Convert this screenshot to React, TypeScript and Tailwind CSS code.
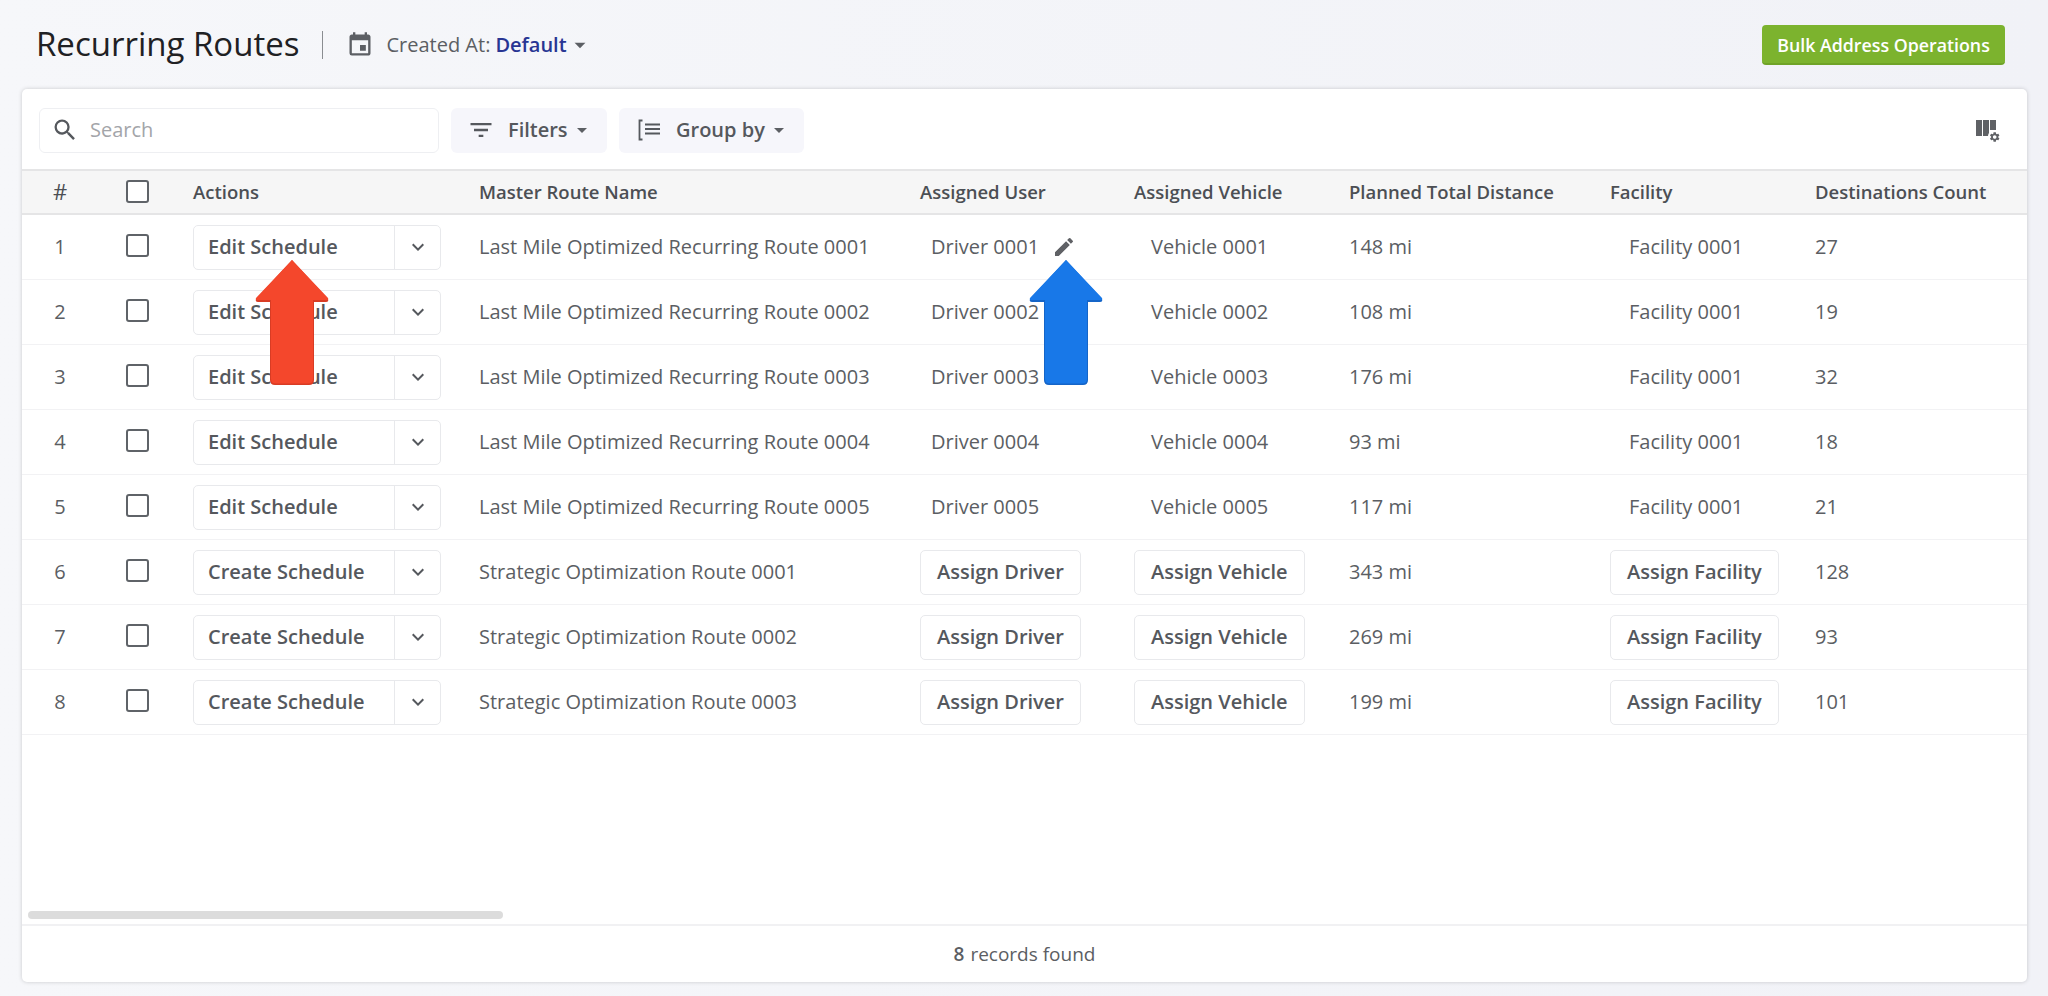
import React from "react";
import { MdEvent, MdSearch, MdFilterList, MdEdit, MdKeyboardArrowDown, MdArrowDropDown } from "react-icons/md";

const grid = "grid grid-cols-[76px_80px_289px_441px_214px_215px_261px_205px_1fr] items-center";

const rows = [
  ["Edit Schedule", "Last Mile Optimized Recurring Route 0001", "Driver 0001", "Vehicle 0001", "148 mi", "Facility 0001", "27"],
  ["Edit Schedule", "Last Mile Optimized Recurring Route 0002", "Driver 0002", "Vehicle 0002", "108 mi", "Facility 0001", "19"],
  ["Edit Schedule", "Last Mile Optimized Recurring Route 0003", "Driver 0003", "Vehicle 0003", "176 mi", "Facility 0001", "32"],
  ["Edit Schedule", "Last Mile Optimized Recurring Route 0004", "Driver 0004", "Vehicle 0004", "93 mi", "Facility 0001", "18"],
  ["Edit Schedule", "Last Mile Optimized Recurring Route 0005", "Driver 0005", "Vehicle 0005", "117 mi", "Facility 0001", "21"],
  ["Create Schedule", "Strategic Optimization Route 0001", "", "", "343 mi", "", "128"],
  ["Create Schedule", "Strategic Optimization Route 0002", "", "", "269 mi", "", "93"],
  ["Create Schedule", "Strategic Optimization Route 0003", "", "", "199 mi", "", "101"],
];

function Check({ className = "" }: { className?: string }) {
  return <span className={"block w-[23px] h-[23px] rounded-[3px] border-[2px] border-[#5f6368] bg-white " + className} />;
}

function Assign({ label }: { label: string }) {
  return (
    <button className="h-[45px] px-4 rounded-[5px] border border-[#e8e9ec] bg-white text-[20px] font-semibold text-[#55585d] whitespace-nowrap">
      {label}
    </button>
  );
}

function GroupIcon() {
  return (
    <svg width="24" height="24" viewBox="0 0 24 24" fill="none" stroke="#55585d" strokeWidth="1.8">
      <path d="M5.5 2.5H2.5V21.5H5.5" />
      <path d="M8 6.5H23M8 11H23M8 15.5H23" />
    </svg>
  );
}

function ColumnsIcon() {
  return (
    <svg width="26" height="28" viewBox="0 0 26 28" fill="#5f6165">
      <rect x="0" y="4" width="6" height="16" />
      <rect x="7" y="4" width="6" height="16" />
      <rect x="14" y="4" width="6" height="10" />
      <circle cx="18.7" cy="21" r="7" fill="#fff" />
      <g transform="translate(12.7 15) scale(0.5)">
        <path d="M19.14 12.94c.04-.3.06-.61.06-.94 0-.32-.02-.64-.07-.94l2.03-1.58c.18-.14.23-.41.12-.61l-1.92-3.32c-.12-.22-.37-.29-.59-.22l-2.39.96c-.5-.38-1.03-.7-1.62-.94l-.36-2.54c-.04-.24-.24-.41-.48-.41h-3.84c-.24 0-.43.17-.47.41l-.36 2.54c-.59.24-1.13.57-1.62.94l-2.39-.96c-.22-.08-.47 0-.59.22L2.74 8.87c-.12.21-.08.47.12.61l2.03 1.58c-.05.3-.09.63-.09.94s.02.64.07.94l-2.03 1.58c-.18.14-.23.41-.12.61l1.92 3.32c.12.22.37.29.59.22l2.39-.96c.5.38 1.03.7 1.62.94l.36 2.54c.05.24.24.41.48.41h3.84c.24 0 .44-.17.47-.41l.36-2.54c.59-.24 1.13-.56 1.62-.94l2.39.96c.22.08.47 0 .59-.22l1.92-3.32c.12-.22.07-.47-.12-.61l-2.01-1.58zM12 15.6c-1.98 0-3.6-1.62-3.6-3.6s1.62-3.6 3.6-3.6 3.6 1.62 3.6 3.6-1.62 3.6-3.6 3.6z" />
      </g>
    </svg>
  );
}

function Arrow({ fill, edge, className }: { fill: string; edge: string; className: string }) {
  return (
    <svg className={className} width="76" height="128" viewBox="0 0 76 128">
      <path d="M38 2 L74 41 Q75 44 72 44 L60 44 L60 122 Q60 127 55 127 L21 127 Q16 127 16 122 L16 44 L4 44 Q1 44 2 41 Z" fill={edge} />
      <path d="M38 2 L74 40 Q75 42 72 42 L59 42 L59 121 Q59 125.500 54 125.500 L22 125.500 Q17 125.500 17 121 L17 42 L4 42 Q1 42 2 40 Z" fill={fill} />
    </svg>
  );
}

export default function App() {
  return (
    <div
      className="relative w-[2048px] h-[996px] overflow-hidden bg-linear-to-r from-[#f6f7fa] to-[#f1f2f7] text-[#55585d]"
      style={{ fontFamily: '"Open Sans", "Noto Sans", sans-serif' }}
    >
      <header className="h-[89px] pl-[36px] pr-[43px] flex items-center">
        <h1 className="text-[33px] leading-none text-[#1f2124] font-normal whitespace-nowrap -mt-[2px]">Recurring Routes</h1>
        <span className="ml-[23px] w-px h-[28px] bg-[#8a8d91]" />
        <MdEvent className="ml-[23px] text-[#5c5f64]" size={28} />
        <span className="ml-[12px] text-[20px] text-[#5b5e63] whitespace-nowrap">Created At:</span>
        <span className="ml-[5px] text-[20px] font-semibold text-[#283593]">Default</span>
        <MdArrowDropDown className="text-[#5c5f64]" size={26} />
        <button className="ml-auto h-[40px] w-[243px] pt-[4px] rounded-[4px] bg-[#7cb32e] border-b-2 border-[#6fa327] text-white text-[17.8px] font-semibold whitespace-nowrap">
          Bulk Address Operations
        </button>
      </header>

      <main className="relative ml-[22px] w-[2005px] h-[893px] bg-white rounded-[5px] shadow-[0_0_4px_rgba(0,0,0,0.18)] flex flex-col overflow-hidden">
        <div className="h-[80px] pt-[2px] pl-[17px] pr-[25px] flex items-center gap-3 shrink-0">
          <div className="w-[400px] h-[45px] rounded-[6px] border border-[#eeeff2] flex items-center pl-[11px]">
            <MdSearch size={28} className="text-[#55585d]" />
            <span className="ml-[11px] text-[20px] text-[#a3a5a9]">Search</span>
          </div>
          <button className="w-[156px] h-[45px] rounded-[6px] bg-[#f6f6fb] flex items-center pl-[16px]">
            <MdFilterList size={28} className="text-[#55585d]" />
            <span className="ml-[13px] text-[20px] font-semibold text-[#55585d]">Filters</span>
            <MdArrowDropDown size={24} className="ml-[2px] text-[#5c5f64]" />
          </button>
          <button className="w-[185px] h-[45px] rounded-[6px] bg-[#f6f6fb] flex items-center pl-[18px]">
            <GroupIcon />
            <span className="ml-[15px] text-[20px] font-semibold text-[#55585d]">Group by</span>
            <MdArrowDropDown size={24} className="ml-[2px] text-[#5c5f64]" />
          </button>
          <span className="ml-auto"><ColumnsIcon /></span>
        </div>

        <div className={grid + " h-[46px] shrink-0 bg-[#f6f6f6] border-y-[2px] border-[#e5e5e6] text-[18.5px] font-semibold text-[#4c4f54]"}>
          <div className="text-center text-[22px] font-normal -mt-[1px]">#</div>
          <div className="flex justify-center"><Check className="-mt-[2px] -ml-[1px]" /></div>
          <div className="pl-[15px] -mt-[1px]">Actions</div>
          <div className="pl-[12px] -mt-[1px]">Master Route Name</div>
          <div className="pl-[12px] -mt-[1px]">Assigned User</div>
          <div className="pl-[12px] -mt-[1px]">Assigned Vehicle</div>
          <div className="pl-[12px] -mt-[1px]">Planned Total Distance</div>
          <div className="pl-[12px] -mt-[1px]">Facility</div>
          <div className="pl-[12px] -mt-[1px] whitespace-nowrap">Destinations Count</div>
        </div>

        <div className="flex-1 relative min-h-0">
          {rows.map((r, i) => (
            <div key={i} className={grid + " h-[65px] border-b border-[#f2f2f4] text-[20px] text-[#5b5e63]"}>
              <div className="text-center -mt-[1px]">{i + 1}</div>
              <div className="flex justify-center"><Check className="-mt-[3px] -ml-[1px]" /></div>
              <div className="pl-[15px]">
                <div className="flex w-[248px] h-[45px] rounded-[5px] border border-[#e8e9ec]">
                  <div className="flex-1 pl-[14px] flex items-center text-[20px] font-semibold text-[#55585d] whitespace-nowrap">{r[0]}</div>
                  <div className="w-[46px] border-l border-[#e8e9ec] flex items-center justify-center">
                    <MdKeyboardArrowDown size={24} className="text-[#55585d]" />
                  </div>
                </div>
              </div>
              <div className="pl-[12px] -mt-[1px] whitespace-nowrap">{r[1]}</div>
              <div className="pl-[12px]">
                {r[2] ? (
                  <div className="pl-[11px] flex items-center whitespace-nowrap -mt-[1px]">
                    {r[2]}
                    {i === 0 && <MdEdit size={24} className="ml-[13px] text-[#5f6165]" />}
                  </div>
                ) : <Assign label="Assign Driver" />}
              </div>
              <div className="pl-[12px]">
                {r[3] ? <div className="pl-[17px] whitespace-nowrap -mt-[1px]">{r[3]}</div> : <Assign label="Assign Vehicle" />}
              </div>
              <div className="pl-[12px] whitespace-nowrap -mt-[1px]">{r[4]}</div>
              <div className="pl-[12px]">
                {r[5] ? <div className="pl-[19px] whitespace-nowrap -mt-[1px]">{r[5]}</div> : <Assign label="Assign Facility" />}
              </div>
              <div className="pl-[12px] -mt-[1px]">{r[6]}</div>
            </div>
          ))}
          <div className="absolute left-[6px] bottom-[5px] w-[475px] h-[8px] rounded-full bg-[#dcdcdc]" />
        </div>

        <footer className="h-[58px] shrink-0 border-t-[2px] border-[#f1f1f3] flex items-center justify-center text-[19px] text-[#5b5e63]">
          <span className="font-semibold mr-[6px]">8</span> records found
        </footer>

        <Arrow fill="#f4472c" edge="#d93c24" className="absolute left-[232px] top-[169px]" />
        <Arrow fill="#1878e8" edge="#1565c8" className="absolute left-[1006px] top-[169px]" />
      </main>
    </div>
  );
}
